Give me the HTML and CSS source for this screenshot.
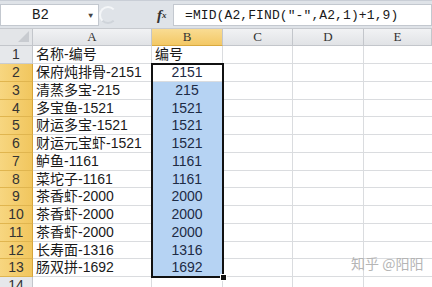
FILE: index.html
```html
<!DOCTYPE html>
<html lang="zh-CN">
<head>
    <meta charset="UTF-8">
    <title>编号提取</title>
    <link rel="stylesheet" href="styles.css">
</head>
<body>
    <div class="window">
        <div class="formula-bar">
            <div class="name-box">
                <span class="cell-ref">B2</span>
                <span class="drop">&#9660;</span>
            </div>
            <div class="grip"><span class="grip-ring"></span></div>
            <div class="fx"><i>f</i><sub>x</sub></div>
            <div class="formula">=MID(A2,FIND(&Prime;-&Prime;,A2,1)+1,9)</div>
        </div>

        <div class="sheet">
            <div class="corner"><span class="corner-tri"></span></div>
            <div class="col-head">A</div>
            <div class="col-head active">B</div>
            <div class="col-head">C</div>
            <div class="col-head">D</div>
            <div class="col-head last">E</div>

            <div class="row-head">1</div>
            <div class="cell">名称-编号</div>
            <div class="cell">编号</div>
            <div class="cell"></div><div class="cell"></div><div class="cell last"></div>

            <div class="row-head active">2</div>
            <div class="cell">保府炖排骨-2151</div>
            <div class="cell num">2151</div>
            <div class="cell"></div><div class="cell"></div><div class="cell last"></div>

            <div class="row-head active">3</div>
            <div class="cell">清蒸多宝-215</div>
            <div class="cell num sel">215</div>
            <div class="cell"></div><div class="cell"></div><div class="cell last"></div>

            <div class="row-head active">4</div>
            <div class="cell">多宝鱼-1521</div>
            <div class="cell num sel">1521</div>
            <div class="cell"></div><div class="cell"></div><div class="cell last"></div>

            <div class="row-head active">5</div>
            <div class="cell">财运多宝-1521</div>
            <div class="cell num sel">1521</div>
            <div class="cell"></div><div class="cell"></div><div class="cell last"></div>

            <div class="row-head active">6</div>
            <div class="cell">财运元宝虾-1521</div>
            <div class="cell num sel">1521</div>
            <div class="cell"></div><div class="cell"></div><div class="cell last"></div>

            <div class="row-head active">7</div>
            <div class="cell">鲈鱼-1161</div>
            <div class="cell num sel">1161</div>
            <div class="cell"></div><div class="cell"></div><div class="cell last"></div>

            <div class="row-head active">8</div>
            <div class="cell">菜坨子-1161</div>
            <div class="cell num sel">1161</div>
            <div class="cell"></div><div class="cell"></div><div class="cell last"></div>

            <div class="row-head active">9</div>
            <div class="cell">茶香虾-2000</div>
            <div class="cell num sel">2000</div>
            <div class="cell"></div><div class="cell"></div><div class="cell last"></div>

            <div class="row-head active">10</div>
            <div class="cell">茶香虾-2000</div>
            <div class="cell num sel">2000</div>
            <div class="cell"></div><div class="cell"></div><div class="cell last"></div>

            <div class="row-head active">11</div>
            <div class="cell">茶香虾-2000</div>
            <div class="cell num sel">2000</div>
            <div class="cell"></div><div class="cell"></div><div class="cell last"></div>

            <div class="row-head active">12</div>
            <div class="cell">长寿面-1316</div>
            <div class="cell num sel">1316</div>
            <div class="cell"></div><div class="cell"></div><div class="cell last"></div>

            <div class="row-head active">13</div>
            <div class="cell">肠双拼-1692</div>
            <div class="cell num sel">1692</div>
            <div class="cell"></div><div class="cell"></div><div class="cell last"></div>

            <div class="row-head">14</div>
            <div class="cell"></div><div class="cell"></div>
            <div class="cell"></div><div class="cell"></div><div class="cell last"></div>

            <!-- 选区边框 B2:B13 -->
            <div class="selection"><span class="handle"></span></div>
        </div>

        <div class="watermark">知乎 @阳阳</div>
    </div>
</body>
</html>
```

FILE: styles.css
```css
* {
    margin: 0;
    padding: 0;
    box-sizing: border-box;
}

body {
    width: 432px;
    height: 287px;
    overflow: hidden;
    background: #fff;
    font-family: 'Liberation Sans', 'Noto Sans CJK SC', sans-serif;
    color: #1a1a1a;
}

.window {
    position: relative;
    height: 100%;
}

/* 编辑栏 */
.formula-bar {
    display: flex;
    height: 28px;
    padding: 3px 0 2px;
    background: #dfe3e8;
    border-top: 1px solid #c9ced6;
}

.name-box {
    width: 99px;
    background: #fff;
    border: 1px solid #c3c8cf;
    display: flex;
    align-items: center;
    padding-left: 31px;
    padding-right: 5px;
    font-family: 'Liberation Mono', monospace;
    font-size: 14px;
}

.cell-ref {
    flex: 1;
}

.drop {
    font-size: 8px;
    color: #444;
}

.grip {
    width: 54px;
    display: flex;
    align-items: center;
    padding-left: 0;
}

.grip-ring {
    width: 18px;
    height: 18px;
    border-radius: 50%;
    border: 2px solid #f4f6f8;
    border-right-color: transparent;
    border-bottom-color: #cfd4da;
}

.fx {
    width: 20px;
    font-family: 'Liberation Serif', serif;
    font-weight: bold;
    font-size: 15px;
    color: #333;
    display: flex;
    align-items: center;
    padding-left: 4px;
}

.fx sub {
    font-size: 9px;
    font-style: italic;
}

.formula {
    flex: 1;
    background: #fff;
    border: 1px solid #c3c8cf;
    padding-left: 11px;
    font-family: 'Liberation Mono', monospace;
    font-size: 13px;
    line-height: 21px;
    letter-spacing: 0.1px;
}

/* 表格 */
.sheet {
    position: relative;
    display: grid;
    grid-template-columns: 33px 119px 71px 70px 71px 1fr;
    grid-template-rows: 17px 18px repeat(12, 17.75px) 18px;
    border-top: 1px solid #c6c9ce;
}

.corner {
    background: #e3e5e8;
    border-right: 1px solid #c3c6cb;
    border-bottom: 1px solid #c3c6cb;
    position: relative;
}

.corner-tri {
    position: absolute;
    right: 3px;
    bottom: 3px;
    border-left: 11px solid transparent;
    border-bottom: 11px solid #c8cbd0;
}

.col-head {
    background: linear-gradient(#f1f2f4, #e1e3e6);
    border-right: 1px solid #c3c6cb;
    border-bottom: 1px solid #c3c6cb;
    text-align: center;
    font-family: 'Liberation Serif', serif;
    font-size: 13px;
    line-height: 16px;
    color: #333;
}

.col-head.active {
    background: linear-gradient(#f9dc93, #f3c865);
    border-bottom-color: #d8a93f;
}

.row-head {
    background: #e6e8eb;
    border-right: 1px solid #c3c6cb;
    border-bottom: 1px solid #c9ccd1;
    text-align: center;
    font-size: 14px;
    line-height: 17px;
    color: #333;
}

.row-head.active {
    background: linear-gradient(90deg, #f7d680, #f1c65e);
    border-bottom-color: #e0b54f;
    border-right-color: #d5a43c;
}

.cell {
    border-right: 1px solid #dadcdf;
    border-bottom: 1px solid #dadcdf;
    font-size: 14px;
    line-height: 17px;
    padding-left: 3px;
    white-space: nowrap;
}

.cell.last {
    border-right: none;
}

.num {
    text-align: center;
    padding-left: 0;
    color: #1d2b45;
}

.sel {
    background: #b6d3f3;
    border-bottom-color: #b6d3f3;
}

.selection {
    position: absolute;
    left: 151px;
    top: 34px;
    width: 73px;
    height: 215px;
    border: 2px solid #111;
    pointer-events: none;
}

.handle {
    position: absolute;
    right: -5px;
    bottom: -5px;
    width: 7px;
    height: 7px;
    background: #111;
    border: 1px solid #fff;
}

.watermark {
    position: absolute;
    left: 351px;
    top: 253px;
    font-family: 'Noto Sans CJK SC', sans-serif;
    font-size: 14px;
    color: #b5b5b5;
}
```
